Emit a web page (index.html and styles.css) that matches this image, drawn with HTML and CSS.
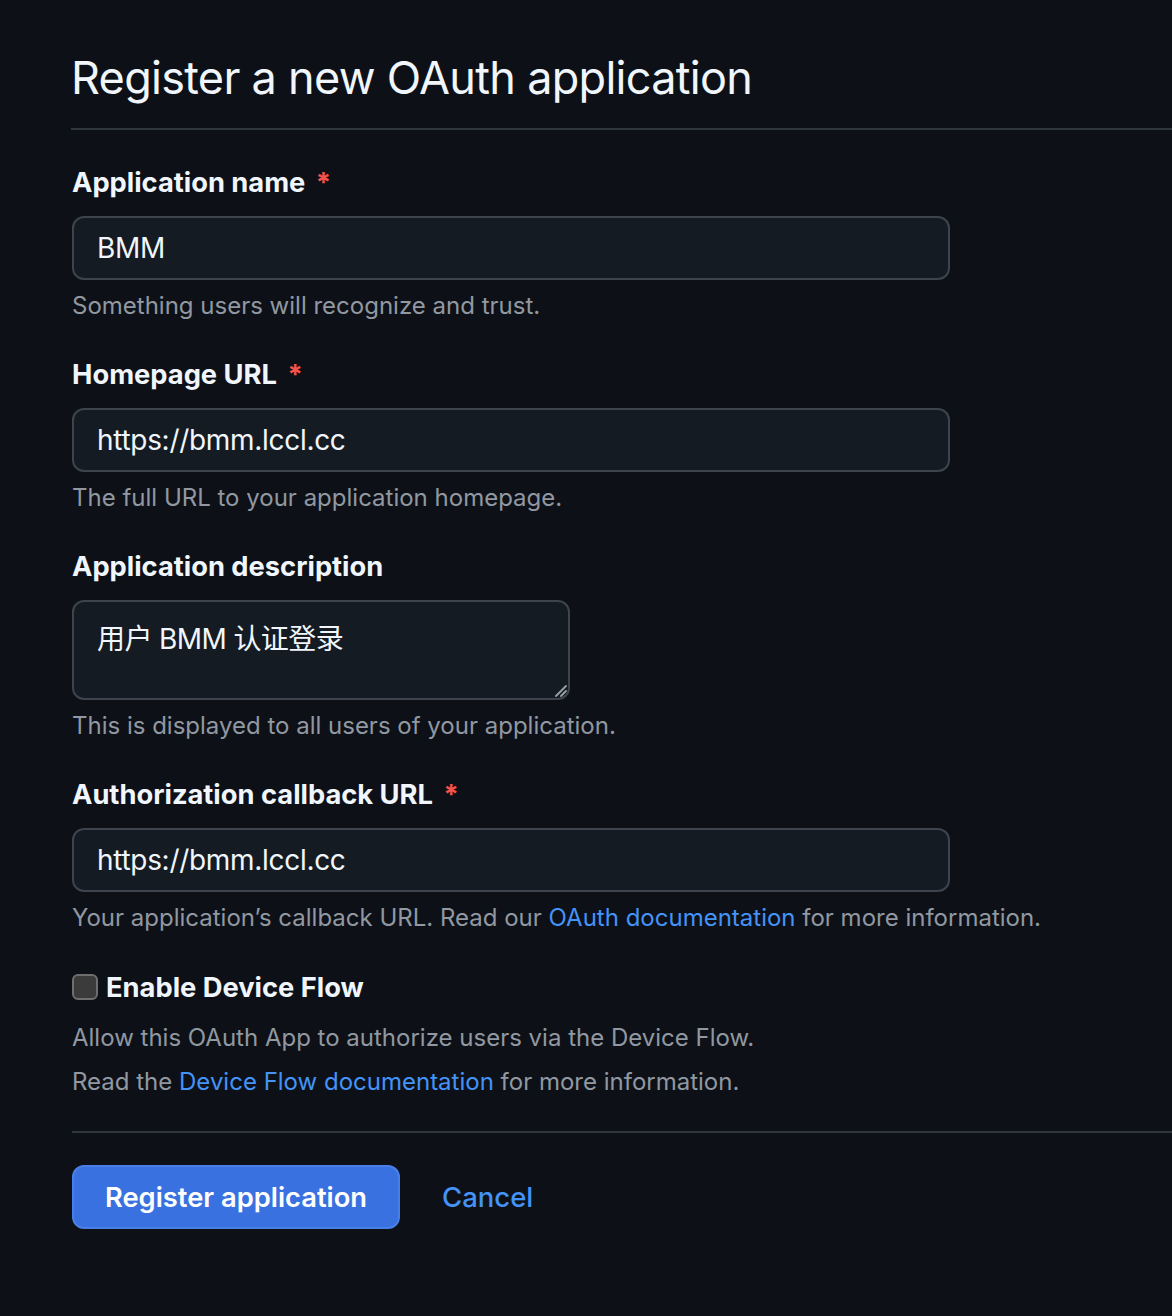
FILE: index.html
```html
<!DOCTYPE html>
<html lang="en">
<head>
<meta charset="utf-8">
<title>Register a new OAuth application</title>
<link rel="stylesheet" href="styles.css">
</head>
<body>
<main class="page">
  <h1 class="title">Register a new OAuth application</h1>
  <form class="form">
    <div class="group">
      <label class="label">Application name <span class="req">*</span></label>
      <input class="field" type="text" value="BMM">
      <p class="note">Something users will recognize and trust.</p>
    </div>
    <div class="group">
      <label class="label">Homepage URL <span class="req">*</span></label>
      <input class="field" type="text" value="https://bmm.lccl.cc">
      <p class="note">The full URL to your application homepage.</p>
    </div>
    <div class="group">
      <label class="label">Application description</label>
      <div class="area-wrap">
        <textarea class="area">用户 BMM 认证登录</textarea>
        <svg class="grip" width="14" height="14" viewBox="0 0 14 14"><path d="M3 13 L13 3 M8 13 L13 8" stroke="#9aa0a8" stroke-width="1.8" stroke-linecap="round"/></svg>
      </div>
      <p class="note">This is displayed to all users of your application.</p>
    </div>
    <div class="group">
      <label class="label">Authorization callback URL <span class="req">*</span></label>
      <input class="field" type="text" value="https://bmm.lccl.cc">
      <p class="note">Your application’s callback URL. Read our <a class="link" href="#">OAuth documentation</a> for more information.</p>
    </div>
    <div class="group">
      <label class="check-row"><span class="checkbox"></span><span class="check-label">Enable Device Flow</span></label>
      <p class="note first">Allow this OAuth App to authorize users via the Device Flow.</p>
      <p class="note">Read the <a class="link" href="#">Device Flow documentation</a> for more information.</p>
    </div>
    <div class="actions">
      <button class="btn" type="button">Register application</button>
      <a class="cancel" href="#">Cancel</a>
    </div>
  </form>
</main>
</body>
</html>
```
FILE: styles.css
```css
html, body {
  margin: 0;
  padding: 0;
  background: #0d1117;
}
body {
  font-family: Inter, "Noto Sans", "Noto Sans CJK SC", sans-serif;
  color: #f0f6fc;
}
.page {
  margin-left: 72px;
  padding-top: 48px;
}
.title {
  margin: 0 0 0 -1px;
  font-size: 45px;
  font-weight: 400;
  line-height: 60px;
  letter-spacing: -0.7px;
  padding-bottom: 20px;
  border-bottom: 2px solid #30363d;
}
.form {
  padding-top: 33px;
}
.group {
  margin-bottom: 31px;
}
.label {
  display: block;
  font-size: 27.3px;
  font-weight: 700;
  line-height: 40px;
  margin-bottom: 13px;
}
.req {
  color: #f85149;
  margin-left: 4px;
}
.field, .area {
  display: block;
  box-sizing: border-box;
  width: 878px;
  height: 64px;
  padding: 0 23px;
  background: #151b23;
  border: 2px solid #3d444d;
  border-radius: 12px;
  color: #f0f6fc;
  font-family: Inter, "Noto Sans CJK SC", sans-serif;
  font-size: 28px;
  letter-spacing: -0.3px;
  outline: none;
}
.area-wrap {
  position: relative;
  width: 498px;
}
.area {
  width: 498px;
  height: 100px;
  padding: 17px 23px;
  resize: none;
  line-height: 40px;
  letter-spacing: -0.6px;
}
.grip {
  position: absolute;
  right: 3px;
  bottom: 3px;
}
.note {
  margin: 8px 0 0;
  font-size: 24px;
  line-height: 36px;
  color: #9198a1;
}
.note.first {
  margin-top: 13px;
}
.link {
  color: #4493f8;
  text-decoration: none;
}
.check-row {
  display: flex;
  align-items: center;
  gap: 8px;
  height: 40px;
}
.checkbox {
  box-sizing: border-box;
  width: 26px;
  height: 26px;
  background: #3b3b3b;
  border: 2px solid #6e6e6e;
  border-radius: 6px;
}
.check-label {
  font-size: 27.3px;
  font-weight: 700;
}
.actions {
  border-top: 2px solid #30363d;
  padding-top: 32px;
  display: flex;
  align-items: center;
  gap: 42px;
}
.btn {
  box-sizing: border-box;
  width: 328px;
  height: 64px;
  background: #3a71e0;
  border: 2px solid #4a7fe8;
  border-radius: 12px;
  color: #ffffff;
  font-family: Inter, sans-serif;
  font-size: 27.3px;
  font-weight: 600;
  padding: 0;
}
.cancel {
  color: #4493f8;
  font-size: 27.5px;
  font-weight: 500;
  text-decoration: none;
}
```
